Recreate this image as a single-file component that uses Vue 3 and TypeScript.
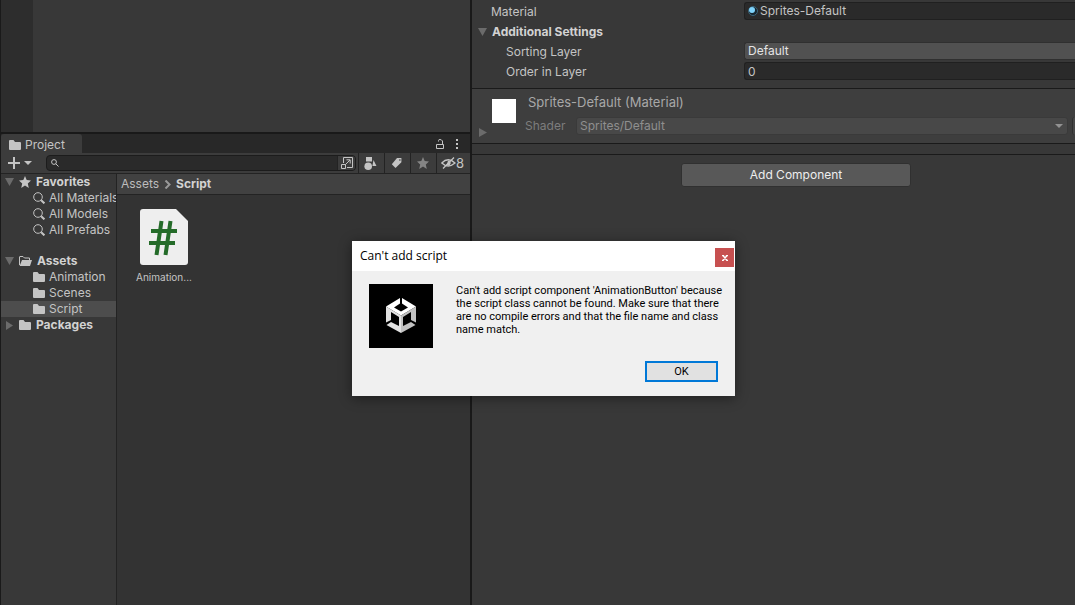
<script setup lang="ts">
import { ref } from 'vue'

interface TreeItem {
  label: string
  icon: 'star' | 'search' | 'open' | 'folder'
  root?: boolean
  arrow?: 'down' | 'right'
  gapBefore?: boolean
}

const items: TreeItem[] = [
  { label: 'Favorites', icon: 'star', root: true, arrow: 'down' },
  { label: 'All Materials', icon: 'search' },
  { label: 'All Models', icon: 'search' },
  { label: 'All Prefabs', icon: 'search' },
  { label: 'Assets', icon: 'open', root: true, arrow: 'down', gapBefore: true },
  { label: 'Animation', icon: 'folder' },
  { label: 'Scenes', icon: 'folder' },
  { label: 'Script', icon: 'folder' },
  { label: 'Packages', icon: 'folder', root: true, arrow: 'right' },
]

const selected = ref('Script')
const query = ref('')
const order = ref('0')
const dialogOpen = ref(true)
</script>

<template>
  <div class="editor">
    <div class="left">
      <div class="scene"><div class="gutter"></div></div>

      <section class="project">
        <header class="tabs">
          <button class="tab">
            <svg class="folder" width="12" height="10" viewBox="0 0 12 10"><path d="M0 1Q0 0 1 0H4.5L6 2H11Q12 2 12 3V9Q12 10 11 10H1Q0 10 0 9Z" /></svg>
            Project
          </button>
          <span class="grow"></span>
          <button class="plain" aria-label="Lock">
            <svg width="10" height="12" viewBox="0 0 10 12"><path d="M1.5 6.5H8.5V10.5H1.5ZM3.5 3.5V2.5Q3.5 1.5 5 1.5T7.5 3V6" class="line" /></svg>
          </button>
          <button class="plain menu" aria-label="Menu">
            <svg width="4" height="12" viewBox="0 0 4 12"><path d="M1 1H3V3H1ZM1 5H3V7H1ZM1 9H3V11H1Z" /></svg>
          </button>
        </header>

        <div class="toolbar">
          <button class="plain add" aria-label="Create">
            <svg width="24" height="12" viewBox="0 0 24 12"><path d="M5 0H7V5H12V7H7V12H5V7H0V5H5ZM16 4H24L20 8Z" /></svg>
          </button>
          <div class="search">
            <svg width="8" height="8" viewBox="0 0 8 8"><circle cx="3" cy="3" r="2.4" class="line" /><path d="M4.8 4.8L7.5 7.5" class="line" /></svg>
            <input v-model="query" type="text" aria-label="Search" />
            <button class="plain jump" aria-label="Open search">
              <svg width="12" height="12" viewBox="0 0 12 12"><path d="M2.5 6V.5H11.5V10.5H6M.5 7.5H4.5V11.5H.5ZM4.5 7.5L9 3M5.5 2.8H9.2V6.5" class="line" /></svg>
            </button>
          </div>
          <button class="tool" aria-label="Filter by type">
            <svg width="13" height="13" viewBox="0 0 13 13"><path d="M2 0H8V4.5H2ZM9.5 3L12.5 9H8.4Z" /><circle cx="4.2" cy="9.2" r="3.8" /></svg>
          </button>
          <button class="tool" aria-label="Filter by label">
            <svg width="12" height="12" viewBox="0 0 12 12"><path fill-rule="evenodd" d="M6 1H10.4V5.2L4.5 11L.8 7.2ZM8.3 2.3V3.7H9.5V2.3Z" /></svg>
          </button>
          <button class="tool dim" aria-label="Save search">
            <svg width="12" height="12" viewBox="0 0 12 12"><path d="M6 0L7.7 4.1L12 4.5L8.8 7.4L9.8 12L6 9.5L2.2 12L3.2 7.4L0 4.5L4.3 4.1Z" /></svg>
          </button>
          <button class="tool hidden-count">
            <svg width="15" height="12" viewBox="0 0 15 12"><path d="M.8 6Q7 -.5 14 6Q7 12 .8 6ZM2 11.5L13 .5" class="line eye" /><path d="M7 3.5Q9.5 3.5 9.8 6Q9.6 8.2 7.5 8.4L5.4 8Q6.5 6.5 7 3.5Z" /></svg>
            8
          </button>
        </div>

        <div class="body">
          <ul class="tree">
            <li v-for="item in items" :key="item.label" :class="{ gap: item.gapBefore }">
              <button class="node" :class="{ root: item.root, active: selected === item.label }" @click="selected = item.label">
                <span v-if="item.root" class="arrow">
                  <svg v-if="item.arrow === 'down'" width="9" height="8" viewBox="0 0 9 8"><path d="M0 0H9L4.5 8Z" /></svg>
                  <svg v-else width="8" height="9" viewBox="0 0 8 9"><path d="M1 0L8 4.5L1 9Z" /></svg>
                </span>
                <svg v-if="item.icon === 'star'" width="12" height="12" viewBox="0 0 12 12"><path d="M6 0L7.7 4.1L12 4.5L8.8 7.4L9.8 12L6 9.5L2.2 12L3.2 7.4L0 4.5L4.3 4.1Z" /></svg>
                <svg v-else-if="item.icon === 'search'" width="12" height="12" viewBox="0 0 12 12"><circle cx="5" cy="5" r="4.3" class="line" /><path d="M8.2 8.2L11.4 11.4" class="line thick" /></svg>
                <svg v-else-if="item.icon === 'open'" width="13" height="10" viewBox="0 0 13 10"><path d="M.5 9V1Q.5 .5 1 .5H4L5.5 2H10.5V4" class="line" /><path d="M3 4H13L11 10H.6Z" /></svg>
                <svg v-else width="12" height="10" viewBox="0 0 12 10"><path d="M0 1Q0 0 1 0H4.5L6 2H11Q12 2 12 3V9Q12 10 11 10H1Q0 10 0 9Z" /></svg>
                <span class="name">{{ item.label }}</span>
              </button>
            </li>
          </ul>

          <div class="content">
            <nav class="crumbs">
              <a href="#">Assets</a>
              <svg width="7" height="9" viewBox="0 0 7 9"><path d="M1.5 .5L5.5 4.5L1.5 8.5" class="line chevron" /></svg>
              <a href="#" class="current">Script</a>
            </nav>
            <div class="files">
              <button class="file">
                <svg width="48" height="56" viewBox="0 0 48 56">
                  <path class="sheet" d="M3 0H36L48 12V53Q48 56 45 56H3Q0 56 0 53V3Q0 0 3 0Z" />
                  <path class="hash" d="M21.5 12L16.5 46M30.5 12L25.5 46M11 22H37M9 34H35" />
                </svg>
                <span>Animation...</span>
              </button>
            </div>
          </div>
        </div>
      </section>
    </div>

    <main class="inspector">
      <div class="settings">
        <div class="row">
          <span id="material" class="label">Material</span>
          <button class="field object" aria-labelledby="material">
            <svg width="10" height="10" viewBox="0 0 10 10"><circle cx="5" cy="5" r="4.5" class="ball" /><circle cx="4" cy="4" r="3" class="shine" /></svg>
            Sprites-Default
          </button>
        </div>
        <button class="foldout">
          <svg width="9" height="8" viewBox="0 0 9 8"><path d="M0 0H9L4.5 8Z" /></svg>
          Additional Settings
        </button>
        <div class="row sub">
          <label class="label" for="sorting">Sorting Layer</label>
          <select id="sorting" class="field drop"><option>Default</option></select>
        </div>
        <div class="row sub">
          <label class="label" for="order">Order in Layer</label>
          <input id="order" v-model="order" class="field" type="text" />
        </div>
      </div>

      <section class="material">
        <div class="side">
          <div class="swatch"></div>
          <button class="plain expand" aria-label="Expand material">
            <svg width="8" height="9" viewBox="0 0 8 9"><path d="M0 0L8 4.5L0 9Z" /></svg>
          </button>
        </div>
        <div class="info">
          <h2>Sprites-Default (Material)</h2>
          <div class="shader">
            <label for="shader">Shader</label>
            <div class="picker">
              <select id="shader" disabled><option>Sprites/Default</option></select>
              <svg width="8" height="4" viewBox="0 0 8 4"><path d="M0 0H8L4 4Z" /></svg>
            </div>
            <button class="edge" disabled aria-label="Edit"></button>
          </div>
        </div>
      </section>
      <div class="strip"></div>
      <div class="actions"><button class="add-component">Add Component</button></div>
    </main>

    <div v-if="dialogOpen" class="dialog" role="dialog" aria-labelledby="dialog-title">
      <header class="titlebar">
        <h1 id="dialog-title">Can't add script</h1>
        <button class="close" aria-label="Close" @click="dialogOpen = false">
          <svg width="6" height="6" viewBox="0 0 6 6"><path d="M1 .5L5 5.5M5 .5L1 5.5M0 .5H2.2M3.8 .5H6M0 5.5H2.2M3.8 5.5H6" /></svg>
        </button>
      </header>
      <div class="message">
        <svg class="logo" width="64" height="64" viewBox="0 0 64 64">
          <rect width="64" height="64" />
          <path class="top" d="M31 14V19.5L25 23.5L32 27.5L39 23.5L33 19.5V14L47 22.5L32 31.5L17 22.5Z" />
          <path class="west" d="M17 22.5L32 31.5V49L17.5 41L22 38L30 42V33L22 28V36L17 38.5Z" />
          <path class="east" d="M47 22.5L32 31.5V49L46.5 41L42 38L34 42V33L42 28V36L47 38.5Z" />
        </svg>
        <p>Can't add script component 'AnimationButton' because<br />the script class cannot be found. Make sure that there<br />are no compile errors and that the file name and class<br />name match.</p>
      </div>
      <footer><button class="ok" @click="dialogOpen = false">OK</button></footer>
    </div>
  </div>
</template>

<style>
html, body, #app { height: 100%; }
body { margin: 0; overflow: hidden; background: #383838; }
</style>

<style scoped>
* { box-sizing: border-box; }
.editor {
  position: relative;
  display: flex;
  height: 100%;
  overflow: hidden;
  background: #383838;
  color: #c4c4c4;
  font: 12px/16px Inter, "Liberation Sans", sans-serif;
}
button, input, select { font: inherit; color: inherit; margin: 0; padding: 0; border: 0; background: none; outline: none; }
select { appearance: none; opacity: 1; }
button { display: flex; align-items: center; text-align: left; }
svg { display: block; flex: none; fill: #c4c4c4; }
.line { fill: none; stroke: #c4c4c4; stroke-width: 1; }
.thick { stroke-width: 2; }
.grow { flex: 1; }

.left {
  flex: 0 0 472px;
  display: flex;
  flex-direction: column;
  border-left: 1px solid #1a1a1a;
  border-right: 2px solid #191919;
}
.scene { height: 134px; border-bottom: 2px solid #191919; }
.gutter { width: 32px; height: 100%; background: #2d2d2d; }
.project { flex: 1; display: flex; flex-direction: column; min-height: 0; }
.tabs { display: flex; height: 19px; background: #282828; }
.tab { gap: 4px; width: 81px; padding: 2px 0 0 8px; background: #3c3c3c; border-radius: 3px 3px 0 0; }
.menu { margin: 0 11px 0 10px; }

.toolbar { display: flex; height: 21px; background: #3c3c3c; border-bottom: 1px solid #232323; }
.add { width: 45px; padding-left: 7px; }
.search {
  flex: 1;
  display: flex;
  align-items: center;
  height: 16px;
  margin: 2px 2px 0 0;
  padding-left: 4px;
  background: #2a2a2a;
  border: 1px solid #1c1c1c;
  border-radius: 4px;
  overflow: hidden;
}
.search input { flex: 1; min-width: 0; padding-left: 4px; }
.jump { width: 18px; height: 100%; justify-content: center; background: #3c3c3c; border-left: 1px solid #232323; }
.tool { width: 26px; padding-right: 2px; justify-content: center; border-left: 1px solid #232323; }
.dim svg { fill: #858585; }
.hidden-count { width: 34px; font-size: 13px; }
.eye { stroke-width: 1.3; }

.body { flex: 1; display: flex; min-height: 0; }
.tree { flex: 0 0 116px; margin: 0; padding: 0; list-style: none; border-right: 1px solid #232323; overflow: hidden; }
.gap { margin-top: 15px; }
.node { width: 100%; height: 16px; padding-left: 32px; gap: 4px; white-space: nowrap; overflow: hidden; }
.root { padding-left: 4px; gap: 5px; font-weight: 700; color: #d2d2d2; }
.root .arrow { width: 9px; }
.arrow svg { fill: #6b6b6b; }
.active { background: #4d4d4d; }

.content { flex: 1; background: #333333; }
.crumbs { display: flex; align-items: center; gap: 5px; height: 21px; padding-left: 4px; background: #414141; border-bottom: 1px solid #232323; }
.crumbs a { color: #bdbdbd; text-decoration: none; }
.crumbs .current { font-weight: 700; color: #d2d2d2; }
.chevron { stroke: #999999; stroke-width: 2; }
.files { padding: 14px 18px; }
.file { flex-direction: column; gap: 4px; width: 58px; font-size: 10px; }
.sheet { fill: #eeeeee; }
.hash { fill: none; stroke: #246b29; stroke-width: 4; }

.inspector { flex: 1; min-width: 0; }
.settings { height: 89px; padding-top: 2px; border-bottom: 1px solid #1a1a1a; }
.row { display: flex; height: 20px; }
.label { flex: 0 0 272px; padding: 2px 0 0 19px; }
.sub .label { padding-left: 34px; }
.field { flex: 1; height: 18px; padding-left: 3px; background: #2a2a2a; border: 1px solid #202020; border-right: 0; border-radius: 3px 0 0 3px; }
.object { gap: 2px; }
.ball { fill: #16262f; stroke: #3c6478; }
.shine { fill: #7fd3fb; }
.drop { background: #515151; border-color: #303030; color: #e4e4e4; }
.foldout { height: 20px; padding-left: 6px; gap: 5px; font-weight: 700; color: #d2d2d2; }
.foldout svg, .expand svg { fill: #6b6b6b; }

.material { display: flex; height: 55px; background: #3e3e3e; border-bottom: 1px solid #1a1a1a; }
.side { width: 53px; padding-top: 10px; }
.swatch { width: 24px; height: 24px; margin-left: 20px; background: #ffffff; }
.expand { margin: 5px 0 0 7px; }
.info { flex: 1; min-width: 0; }
h2 { margin: 5px 0 0 3px; font-size: 13px; line-height: 16px; font-weight: 400; color: #a8a8a8; }
.shader { display: flex; align-items: center; margin-top: 7px; color: #7d7d7d; }
.shader label { width: 51px; }
.picker { flex: 1; display: flex; align-items: center; height: 18px; padding: 0 4px 0 3px; background: #484848; border: 1px solid #3a3a3a; border-radius: 3px; }
.picker select { flex: 1; color: #8f8f8f; }
.picker svg { fill: #929292; }
.edge { width: 3px; height: 18px; margin-left: 4px; background: #484848; border-left: 1px solid #303030; border-radius: 3px 0 0 3px; }
.strip { height: 11px; border-bottom: 1px solid #1a1a1a; }
.actions { display: flex; justify-content: center; padding: 8px 0 0 45px; }
.add-component { justify-content: center; width: 230px; height: 24px; background: #585858; border: 1px solid #303030; border-radius: 3px; color: #eeeeee; }

.dialog {
  position: absolute;
  left: 352px;
  top: 241px;
  width: 383px;
  background: #f0f0f0;
  color: #000000;
  font: 11px/13px Roboto, "Liberation Sans", sans-serif;
  box-shadow: 0 2px 12px rgba(0, 0, 0, 0.45);
}
.titlebar { display: flex; justify-content: space-between; height: 30px; padding: 7px 1px 0 8px; background: #ffffff; }
h1 { margin: 0; font: 400 12px/16px "Open Sans", sans-serif; }
.close { justify-content: center; width: 19px; height: 19px; background: #c75050; }
.close path { stroke: #ffffff; stroke-width: 1.4; }
.message { display: flex; padding: 13px 17px 0; }
.message p { margin: 0 0 0 23px; white-space: nowrap; }
.logo rect { fill: #000000; }
.logo .top { fill: #ffffff; }
.logo .west { fill: #e2e2e2; }
.logo .east { fill: #c2c2c2; }
footer { display: flex; justify-content: flex-end; padding: 13px 17px 14px; }
.ok { justify-content: center; width: 73px; height: 21px; background: #e1e1e1; border: 2px solid #0078d7; }
</style>
